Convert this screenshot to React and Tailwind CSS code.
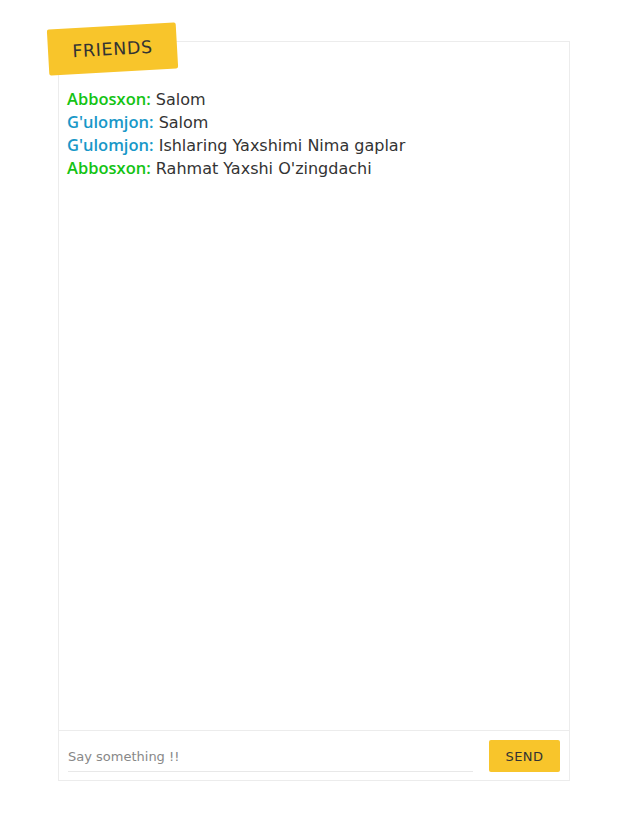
import React from 'react';

const messages = [
  { user: 'Abbosxon', text: 'Salom', color: 'text-[#14c314]' },
  { user: "G'ulomjon", text: 'Salom', color: 'text-[#1898c8]' },
  { user: "G'ulomjon", text: 'Ishlaring Yaxshimi Nima gaplar', color: 'text-[#1898c8]' },
  { user: 'Abbosxon', text: "Rahmat Yaxshi O'zingdachi", color: 'text-[#14c314]' },
];

export default function App() {
  return (
    <div className="min-h-[816px] bg-white pt-[41px] font-['DejaVu_Sans',sans-serif] text-[#333]">
      <div className="relative ml-[58px] flex h-[740px] w-[512px] flex-col border border-[#ececec]">
        {/* ribbon */}
        <div className="absolute left-[-11px] top-[-16px] flex h-[46px] w-[129px] -rotate-[3.2deg] items-center justify-center rounded-[2px] bg-[#f8c52b] text-[17.5px] tracking-[0.6px] text-[#333]">
          FRIENDS
        </div>

        <div className="flex-1 px-[8px] pt-[46px] text-[16px]">
          {messages.map((m, i) => (
            <div key={i} className="flex h-[23px] items-center whitespace-pre">
              <span className={`${m.color} font-['Open_Sans',sans-serif] text-[16.5px] font-semibold`}>{m.user}:</span>
              <span> {m.text}</span>
            </div>
          ))}
        </div>

        <div className="flex items-center border-t border-[#ececec] px-[9px] pb-[8px] pt-[8px]">
          <input
            className="h-[33px] w-[405px] border-b border-[#e8e8e8] pt-[2px] text-[13px] text-[#333] outline-none placeholder:text-[#888]"
            placeholder="Say something !!"
          />
          <button className="ml-auto h-[32px] w-[71px] rounded-[2px] bg-[#f8c52b] pt-[2px] text-[13px] tracking-[0.5px] text-[#333]">
            SEND
          </button>
        </div>
      </div>
    </div>
  );
}
